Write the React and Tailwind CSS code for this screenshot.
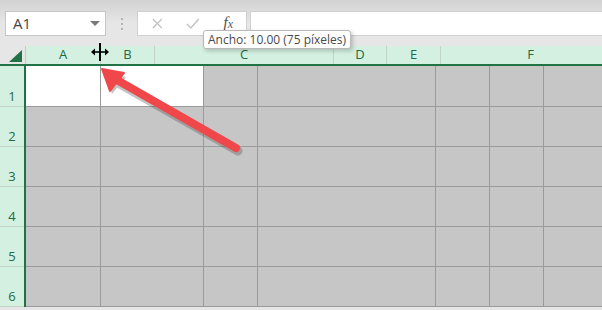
import React from "react";

const colHeaders = [
    { label: "A", w: "w-[75px]" },
    { label: "B", w: "w-[54px]" },
    { label: "C", w: "w-[179px]" },
    { label: "D", w: "w-[53px]" },
    { label: "E", w: "w-[54px]" },
    { label: "F", w: "w-[180px]" },
];

const cellWidths = ["w-[75px]", "w-[103px]", "w-[54px]", "w-[178px]", "w-[54px]", "w-[54px]"];

const rows = [1, 2, 3, 4, 5, 6];

const App = () => {
    return (
        <div
            className="relative w-[602px] h-[310px] overflow-hidden bg-[#e6e6e6] text-[#333]"
            style={{ fontFamily: '"Open Sans", "Noto Sans", sans-serif' }}>
            {/* formula bar */}
            <div className="h-[46px] bg-gradient-to-b from-[#d2d2d2] via-[#e6e6e6] to-[#e6e6e6] flex items-start pt-[11px] pl-[5px]">
                <div className="w-[101px] h-[25px] shrink-0 bg-white border border-[#c6c6c6] flex items-center justify-between pl-[7px] pr-[5px]">
                    <span className="text-[15px] text-[#444]">A1</span>
                    <span className="w-0 h-0 border-l-[5px] border-r-[5px] border-t-[5px] border-l-transparent border-r-transparent border-t-[#7a7a7a]"></span>
                </div>
                <div className="w-[31px] h-[25px] shrink-0 flex flex-col items-center justify-center gap-[3px]">
                    <span className="w-[2px] h-[2px] bg-[#b5b5b5]"></span>
                    <span className="w-[2px] h-[2px] bg-[#b5b5b5]"></span>
                    <span className="w-[2px] h-[2px] bg-[#b5b5b5]"></span>
                </div>
                <div className="w-[110px] h-[25px] shrink-0 bg-white border border-[#d0d0d0] flex items-center pl-[1px]">
                    <svg width="36" height="25" viewBox="0 0 36 25">
                        <path d="M14 8 L23 17 M23 8 L14 17" stroke="#c4c4c4" strokeWidth="1.4" fill="none" />
                    </svg>
                    <svg width="36" height="25" viewBox="0 0 36 25">
                        <path d="M12 13 L16 17 L24 8" stroke="#c4c4c4" strokeWidth="1.6" fill="none" />
                    </svg>
                    <span
                        className="w-[36px] flex items-baseline justify-center italic text-[16px] leading-[20px] text-[#555]"
                        style={{ fontFamily: '"Liberation Serif", serif' }}>
                        f<span className="text-[12px] leading-[20px]">x</span>
                    </span>
                </div>
                <div className="ml-[3px] flex-1 h-[25px] bg-white border border-[#d0d0d0] border-r-0"></div>
            </div>

            {/* column headers */}
            <div className="flex h-[20px] border-b-2 border-[#217346]">
                <div className="w-[26px] shrink-0 bg-[#e6e6e6] border-r border-[#c8c8c8] relative">
                    <svg width="14" height="13" viewBox="0 0 14 13" className="absolute right-[2px] bottom-[1px]">
                        <polygon points="13,0 13,12 0,12" fill="#217346" />
                    </svg>
                </div>
                {colHeaders.map((c) => (
                    <div
                        key={c.label}
                        className={`${c.w} shrink-0 bg-[#d3f0e0] border-r border-[#c3d3ca] flex items-center justify-center text-[13px] text-[#1f6b45]`}>
                        {c.label}
                    </div>
                ))}
            </div>

            {/* grid */}
            <div className="flex flex-col">
                {rows.map((r) => (
                    <div
                        key={r}
                        className={`flex ${r === 1 ? "h-[41px]" : "h-[40px]"}`}>
                        <div className="w-[24px] shrink-0 bg-[#d3f0e0] border-b border-[#c3d3ca] flex items-end justify-center pb-[1px] text-[13px] text-[#1f6b45] leading-[18px]">
                            {r}
                        </div>
                        <div className="w-[2px] shrink-0 bg-[#217346]"></div>
                        {cellWidths.map((w, i) => (
                            <div
                                key={i}
                                className={`${w} shrink-0 border-r border-b border-[#9a9a9a] ${
                                    r === 1 && i < 2 ? "bg-white" : "bg-[#c6c6c6]"
                                }`}></div>
                        ))}
                        <div className="flex-1 border-b border-[#9a9a9a] bg-[#c6c6c6]"></div>
                    </div>
                ))}
            </div>

            {/* tooltip */}
            <div className="absolute left-[203px] top-[30px] h-[19px] px-[4px] bg-white border border-[#b9b9b9] rounded-[3px] shadow-[2px_2px_4px_rgba(0,0,0,0.2)] flex items-center text-[12px] text-[#4a4a4a] whitespace-nowrap">
                Ancho: 10.00 (75 píxeles)
            </div>

            {/* resize cursor */}
            <svg width="20" height="20" viewBox="0 0 20 20" className="absolute left-[90px] top-[42px]">
                <path d="M10 1 V19" stroke="black" strokeWidth="2" />
                <path d="M2 10 H18" stroke="black" strokeWidth="1.6" />
                <polygon points="1,10 5,6.5 5,13.5" fill="black" />
                <polygon points="19,10 15,6.5 15,13.5" fill="black" />
            </svg>

            {/* red arrow */}
            <svg width="602" height="310" viewBox="0 0 602 310" className="absolute left-0 top-0 pointer-events-none">
                <g opacity="0.35" transform="translate(2,3)">
                    <path d="M236 148 L118 81" stroke="#555" strokeWidth="9" strokeLinecap="round" />
                    <polygon points="103,69 110,91 124,74" fill="#555" />
                </g>
                <path d="M236 148 L117 80" stroke="#f0474b" strokeWidth="8" strokeLinecap="round" />
                <polygon points="102,69 110,91 124,73" fill="#f0474b" stroke="#f0474b" strokeWidth="2" strokeLinejoin="round" />
            </svg>
        </div>
    );
};

export default App;
